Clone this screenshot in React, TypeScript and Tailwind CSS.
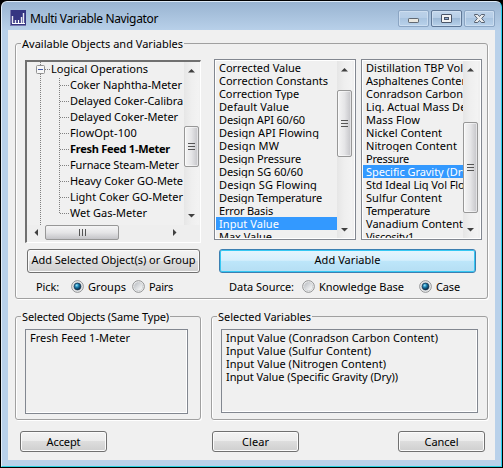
import React, { useLayoutEffect, useRef } from "react";

/* Text run tracked so that it occupies an exact width. */
function T({ w, children, className = "" }: { w: number; children: string; className?: string }) {
  const ref = useRef<HTMLSpanElement>(null);
  useLayoutEffect(() => {
    const el = ref.current;
    if (!el) return;
    el.style.letterSpacing = "0px";
    const natural = el.getBoundingClientRect().width;
    el.style.letterSpacing = `${(w - natural) / children.length}px`;
  }, [w, children]);
  return (
    <span ref={ref} className={`inline-block shrink-0 whitespace-pre ${className}`}>
      {children}
    </span>
  );
}

type Item = [string, number];

const tree: Item[] = [
  ["Coker Naphtha-Meter", 112],
  ["Delayed Coker-Calibra", 113],
  ["Delayed Coker-Meter", 108],
  ["FlowOpt-100", 67],
  ["Fresh Feed 1-Meter", 100],
  ["Furnace Steam-Meter", 109],
  ["Heavy Coker GO-Mete", 113],
  ["Light Coker GO-Meter", 113],
  ["Wet Gas-Meter", 77],
];

const variables: Item[] = [
  ["Corrected Value", 82],
  ["Correction Constants", 109],
  ["Correction Type", 80],
  ["Default Value", 70],
  ["Design API 60/60", 86],
  ["Design API Flowing", 100],
  ["Design MW", 60],
  ["Design Pressure", 82],
  ["Design SG 60/60", 84],
  ["Design SG Flowing", 98],
  ["Design Temperature", 103],
  ["Error Basis", 54],
  ["Input Value", 60],
  ["Max Value", 53],
];

const properties: Item[] = [
  ["Distillation TBP Vol", 97],
  ["Asphaltenes Content", 106],
  ["Conradson Carbon", 97],
  ["Liq. Actual Mass Density", 125],
  ["Mass Flow", 54],
  ["Nickel Content", 76],
  ["Nitrogen Content", 91],
  ["Pressure", 43],
  ["Specific Gravity (Dry)", 105],
  ["Std Ideal Liq Vol Flow", 107],
  ["Sulfur Content", 76],
  ["Temperature", 64],
  ["Vanadium Content", 97],
  ["Viscosity1", 48],
];

const selected: Item[] = [
  ["Input Value (Conradson Carbon Content)", 212],
  ["Input Value (Sulfur Content)", 145],
  ["Input Value (Nitrogen Content)", 160],
  ["Input Value (Specific Gravity (Dry))", 172],
];

function Arrow({ dir }: { dir: "up" | "down" | "left" | "right" }) {
  const d = {
    up: "M0 5.5 L3.5 2 L7 5.5Z",
    down: "M0 2 L7 2 L3.5 5.5Z",
    left: "M5 0 L1.5 3.5 L5 7Z",
    right: "M2 0 L5.5 3.5 L2 7Z",
  }[dir];
  return (
    <svg width="7" height="7" viewBox="0 0 7 7" className="block shrink-0">
      <path d={d} fill="#404040" />
    </svg>
  );
}

function VScroll({ thumb, endPad = "" }: { thumb: string; endPad?: string }) {
  return (
    <div className={`flex w-[15px] shrink-0 flex-col items-center bg-gradient-to-r from-[#e6e6e6] via-[#efefef] to-[#f3f3f3] ${endPad}`}>
      <div className="flex h-4 shrink-0 items-center"><Arrow dir="up" /></div>
      <div className={`flex w-[15px] shrink-0 flex-col items-center justify-center gap-[2px] rounded-[2px] border border-[#979797] bg-gradient-to-r from-[#f5f5f5] via-[#e5e5e7] to-[#c4c4c8] shadow-[inset_0_0_0_1px_#ffffff80] ${thumb}`}>
        <i className="block h-px w-[7px] bg-[#555]" />
        <i className="block h-px w-[7px] bg-[#555]" />
        <i className="block h-px w-[7px] bg-[#555]" />
      </div>
      <div className="flex-1" />
      <div className="flex h-[17px] shrink-0 items-center"><Arrow dir="down" /></div>
    </div>
  );
}

function ListBox({ items, active, textWidth, width, thumb }: { items: Item[]; active: number; textWidth: string; width: string; thumb: string }) {
  return (
    <div className={`flex h-[181px] shrink-0 border border-[#828790] bg-[#f0f0f0] p-px shadow-[inset_0_0_0_1px_#fff] ${width}`}>
      <div className={`shrink-0 overflow-hidden ${textWidth}`}>
        {items.map(([label, w], i) => (
          <div key={label} className={`flex h-[13px] items-center overflow-hidden pl-[3px] leading-[13px] ${i === active ? "bg-[#3399ff] text-white" : ""}`}>
            <T w={w}>{label}</T>
          </div>
        ))}
      </div>
      <VScroll thumb={thumb} />
    </div>
  );
}

function Group({ title, w, className, children }: { title: string; w: number; className: string; children: React.ReactNode }) {
  return (
    <fieldset className={`m-0 min-w-0 shrink-0 rounded-[3px] border border-[#a0a0a0] shadow-[1px_1px_0_#fff,inset_1px_0_0_#fff] ${className}`}>
      <legend className="ml-[5px] flex h-[15px] items-center bg-[#f0f0f0] px-px leading-[15px]">
        <T w={w}>{title}</T>
      </legend>
      {children}
    </fieldset>
  );
}

function Radio({ on }: { on?: boolean }) {
  return (
    <svg width="13" height="13" viewBox="0 0 13 13" className="shrink-0">
      <defs>
        <linearGradient id="radioFace" x1="0" y1="0" x2="1" y2="1">
          <stop offset="0" stopColor="#b9bdc2" />
          <stop offset="1" stopColor="#fff" />
        </linearGradient>
        <radialGradient id="radioDot" cx=".38" cy=".33" r=".7">
          <stop offset="0" stopColor="#9be6fb" />
          <stop offset=".4" stopColor="#1c83b4" />
          <stop offset="1" stopColor="#071f38" />
        </radialGradient>
      </defs>
      <circle cx="6.5" cy="6.5" r="5.8" fill="#f6f6f6" stroke="#8a8c8e" />
      <circle cx="6.5" cy="6.5" r="4.1" fill="url(#radioFace)" stroke="#c3c7cb" strokeWidth=".7" />
      {on && <circle cx="6.5" cy="6.5" r="3.4" fill="url(#radioDot)" stroke="#17344f" strokeWidth=".7" />}
    </svg>
  );
}

function Button({ label, w, className }: { label: string; w: number; className: string }) {
  return (
    <button className={`flex shrink-0 items-center justify-center rounded-[3px] border border-[#707070] bg-[linear-gradient(#f3f3f3_0%,#ebebeb_48%,#dddddd_50%,#cfcfcf_100%)] leading-[14px] shadow-[inset_0_0_0_1px_#fbfbfb] ${className}`}>
      <T w={w}>{label}</T>
    </button>
  );
}

function CaptionButton({ kind }: { kind: "min" | "max" | "close" }) {
  const strong = kind === "max";
  return (
    <div className={`flex h-[17px] w-[31px] items-center justify-center rounded-[2px] border shadow-[inset_0_0_0_1px_#d5e4f4b0] ${strong ? "border-[#5f7796] bg-[linear-gradient(#c3d7ec_0%,#b5cce5_47%,#9db9d6_50%,#b8d1ea_100%)]" : "border-[#8ba5c3] bg-[linear-gradient(#bcd1e8_0%,#b6cee7_47%,#a9c4e0_50%,#b9d2eb_100%)]"}`}>
      <svg width="13" height="11" viewBox="0 0 13 11">
        {kind === "min" && <rect x="1.5" y="5.5" width="10" height="4" rx=".7" fill="#e9e7e0" stroke="#606872" />}
        {kind === "max" && (
          <>
            <rect x="1.5" y="1.5" width="10" height="8" rx=".5" fill="#f3f3f3" stroke="#4a5568" />
            <rect x="4.5" y="4.5" width="4" height="2" fill="#8fa9cf" stroke="#4a5568" />
          </>
        )}
        {kind === "close" && (
          <path d="M1.5 1.5H4.7L6.5 3.5L8.3 1.5H11.5V2.3L8.7 5.5L11.5 8.7V9.5H8.3L6.5 7.5L4.7 9.5H1.5V8.7L4.3 5.5L1.5 2.3Z" fill="#e8eaec" stroke="#566171" />
        )}
      </svg>
    </div>
  );
}

export default function App() {
  return (
    <div className="h-[468px] w-[503px] overflow-hidden bg-black pl-px pt-px font-['Noto_Sans',sans-serif] text-[11px] text-black">
      <div className="flex h-[466px] w-[501px] flex-col rounded-t-[6px] border border-t-[#dce9f6] border-l-[#e4eef8] border-r-[#2ad0ee] border-b-[#2ad0df] bg-[linear-gradient(#99b4d1_0px,#b9d1ea_29px,#b9d1ea_100%)] pb-[5px] pl-[6px] pr-[5px]">
        <header className="flex h-[28px] shrink-0 items-start pl-[2px] pt-[8px]">
          <svg width="16" height="16" viewBox="0 0 16 16" className="shrink-0">
            <rect width="16" height="16" fill="#353582" />
            <path d="M0 15.5H16M.5 0V16" stroke="#7677ad" />
            <path d="M2.5 6V13M5.5 10V13M11.5 7V13M13.5 3V13" stroke="#e8e8f2" strokeWidth="1.4" />
            <path d="M2 13.5H15M8.5 10V13" stroke="#fff" strokeWidth="1.2" />
          </svg>
          <T w={128} className="ml-[4px] text-[12px] leading-[18px]">Multi Variable Navigator</T>
          <div className="flex-1" />
          <div className="mr-[1px] flex gap-[2px]">
            <CaptionButton kind="min" />
            <CaptionButton kind="max" />
            <CaptionButton kind="close" />
          </div>
        </header>
        <main className="flex h-[430px] w-[487px] shrink-0 flex-col bg-[#f0f0f0] pt-[6px]">
          <Group title="Available Objects and Variables" w={161} className="ml-[7px] h-[263px] w-[473px]">
            <div className="flex items-start pl-[9px] pt-[8px]">
              <div className="mt-[1px] flex h-[183px] w-[176px] shrink-0 flex-col border-t-2 border-l-2 border-t-[#707070] border-l-[#707070] border-r border-b border-r-white border-b-white">
                <div className="flex h-[163px] shrink-0">
                  <div className="relative w-[157px] shrink-0 overflow-hidden">
                    <svg className="absolute left-0 top-0" width="60" height="163" fill="none" stroke="#808080" strokeDasharray="1 1">
                      <path d="M13.5 0V163M32.5 16V151M18 7.5H23M33 23.5H42M33 39.5H42M33 55.5H42M33 71.5H42M33 87.5H42M33 103.5H42M33 119.5H42M33 135.5H42M33 151.5H42" />
                      <rect x="9.5" y="3.5" width="8" height="8" rx="1" fill="#f7f7f7" stroke="#919191" strokeDasharray="none" />
                      <path d="M11 7.5H16" stroke="#3f57a6" strokeDasharray="none" />
                    </svg>
                    <div className="flex h-4 items-start pl-[24px] leading-[13px]"><T w={97}>Logical Operations</T></div>
                    {tree.map(([label, w], i) => (
                      <div key={label} className={`flex h-4 items-start pl-[43px] leading-[13px] ${i === 4 ? "font-bold" : ""}`}><T w={w}>{label}</T></div>
                    ))}
                  </div>
                  <VScroll endPad="pb-px" thumb="mt-[48px] h-[41px]" />
                </div>
                <div className="flex h-[15px] shrink-0 items-center bg-[#eeeeee]">
                  <div className="flex w-[18px] justify-center"><Arrow dir="left" /></div>
                  <div className="flex h-[15px] w-[74px] items-center justify-center gap-[2px] rounded-[2px] border border-[#979797] bg-gradient-to-b from-[#f5f5f5] via-[#e5e5e7] to-[#c4c4c8]">
                    <i className="h-[7px] w-px bg-[#555]" /><i className="h-[7px] w-px bg-[#555]" /><i className="h-[7px] w-px bg-[#555]" />
                  </div>
                  <div className="ml-[52px]"><Arrow dir="right" /></div>
                </div>
              </div>
              <div className="w-[13px] shrink-0" />
              <ListBox items={variables} active={12} textWidth="w-[121px]" width="w-[142px]" thumb="mt-[13px] h-[67px]" />
              <div className="w-[5px] shrink-0" />
              <ListBox items={properties} active={8} textWidth="w-[100px]" width="w-[121px]" thumb="mt-[45px] h-[91px]" />
            </div>
            <div className="mt-[6px] flex pl-[11px]">
              <Button label="Add Selected Object(s) or Group" w={164} className="h-[24px] w-[173px] pb-[2px]" />
              <button className="ml-[19px] flex h-[24px] w-[257px] items-center justify-center rounded-[3px] border border-[#3c7fb1] bg-[linear-gradient(#e5f5fd_0%,#d6effc_47%,#bde6fa_50%,#b5def3_100%)] pb-[2px] leading-[14px] shadow-[inset_0_0_0_1px_#35c8f3]">
                <T w={66}>Add Variable</T>
              </button>
            </div>
            <div className="mt-[6px] flex h-[15px] items-center leading-[13px]">
              <T w={23} className="ml-[20px]">Pick:</T>
              <span className="ml-[12px] flex"><Radio on /></span>
              <T w={38} className="ml-[4px]">Groups</T>
              <span className="ml-[6px] flex"><Radio /></span>
              <T w={24} className="ml-[4px]">Pairs</T>
              <T w={65} className="ml-[56px]">Data Source:</T>
              <span className="ml-[8px] flex"><Radio /></span>
              <T w={85} className="ml-[4px]">Knowledge Base</T>
              <span className="ml-[15px] flex"><Radio on /></span>
              <T w={24} className="ml-[4px]">Case</T>
            </div>
          </Group>
          <div className="mt-[10px] flex gap-[10px] pl-[7px]">
            <Group title="Selected Objects (Same Type)" w={147} className="h-[111px] w-[186px]">
              <div className="ml-[9px] mt-[5px] flex h-[85px] w-[163px] items-start border border-[#828790] pl-[4px] pt-[1px] leading-[13px] shadow-[inset_-1px_-1px_0_#fff]">
                <T w={100}>Fresh Feed 1-Meter</T>
              </div>
            </Group>
            <Group title="Selected Variables" w={93} className="h-[111px] w-[277px]">
              <div className="ml-[9px] mt-[5px] h-[84px] w-[257px] border border-[#828790] pl-[4px] pt-[1px] shadow-[inset_-1px_-1px_0_#fff]">
                {selected.map(([label, w]) => (
                  <div key={label} className="flex h-[13px] items-center leading-[13px]"><T w={w}>{label}</T></div>
                ))}
              </div>
            </Group>
          </div>
          <div className="mt-[11px] flex pl-[12px]">
            <Button label="Accept" w={34} className="h-[21px] w-[87px]" />
            <Button label="Clear" w={27} className="ml-[105px] h-[21px] w-[87px]" />
            <Button label="Cancel" w={34} className="ml-[99px] h-[21px] w-[87px]" />
          </div>
        </main>
      </div>
    </div>
  );
}
